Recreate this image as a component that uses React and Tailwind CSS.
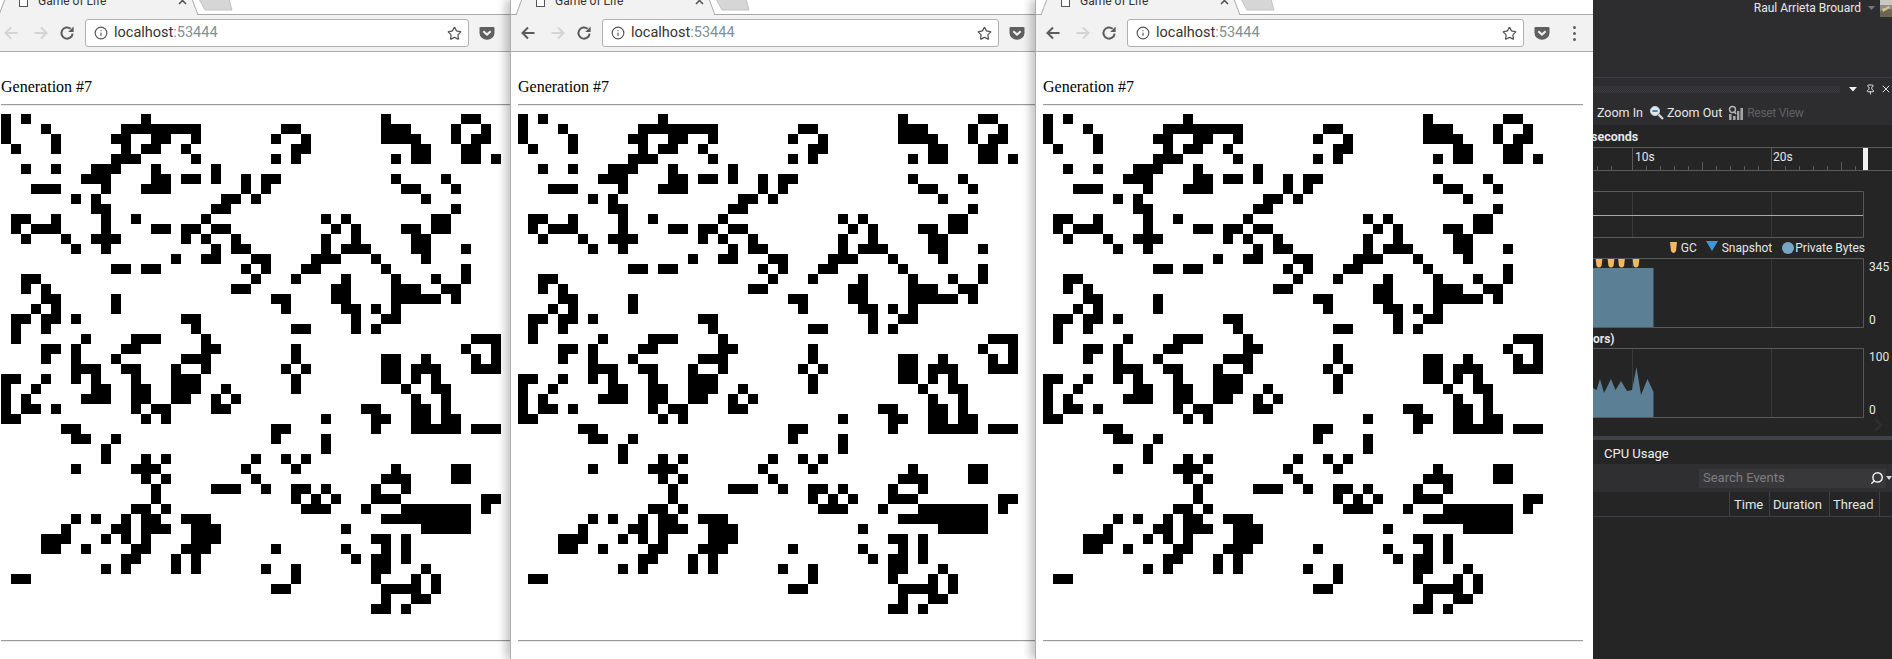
import React from "react";
import { Star, Info, X, Pin, Search } from "lucide-react";

const R = (a, b) => Array.from({ length: b - a + 1 }, (_, i) => a + i);
const ROWS = [
  [0, 2, 14, 38, 46, 47],
  [0, 4, ...R(12, 19), 28, 29, 38, 39, 40, 45, 48],
  [0, 5, 11, 12, 15, 16, 19, 27, 30, 38, 39, 40, 41, 45, 47, 48],
  [1, 5, 12, 14, 15, 18, 29, 30, 41, 42, 46, 47],
  [11, 12, 13, 19, 27, 29, 39, 41, 42, 46, 47, 49],
  [2, 5, 9, 10, 11, 15, 21],
  [8, 9, 10, 15, 16, 18, 19, 21, 24, 26, 27, 39, 44],
  [3, 4, 5, 10, 14, 15, 16, 24, 26, 40, 41, 45],
  [7, 9, 22, 23, 25, 42],
  [9, 10, 21, 22, 45],
  [1, 2, 5, 10, 13, 20, 32, 34, 43, 44],
  [1, 3, 4, 5, 10, 15, 16, 18, 19, 21, 22, 33, 35, 40, 41, 43, 44],
  [2, 6, 9, 10, 11, 18, 20, 23, 32, 35, 41, 42],
  [7, 10, 21, 23, 24, 32, 34, 35, 36, 41, 42, 46],
  [17, 20, 21, 25, 26, 31, 32, 33, 37, 42],
  [11, 12, 14, 15, 24, 26, 30, 31, 38, 46],
  [2, 3, 25, 29, 34, 39, 43, 46],
  [2, 4, 23, 24, 33, 34, 39, 40, 41, 44, 45],
  [4, 5, 11, 27, 28, 33, 34, 39, 40, 41, 42, 43, 45],
  [3, 5, 11, 28, 34, 35, 37, 39],
  [1, 2, 4, 5, 7, 18, 19, 35, 38, 39],
  [1, 4, 19, 29, 30, 35, 37],
  [1, 8, 13, 14, 15, 20, 47, 48, 49],
  [4, 5, 7, 12, 13, 20, 21, 29, 46, 49],
  [4, 7, 11, 18, 19, 20, 29, 38, 39, 42, 47, 49],
  [7, 8, 9, 12, 13, 17, 20, 28, 30, 38, 39, 41, 42, 43, 47, 48, 49],
  [0, 1, 4, 7, 9, 13, 17, 18, 19, 29, 38, 39, 41, 43],
  [0, 3, 9, 10, 13, 14, 17, 18, 19, 22, 29, 40, 43, 44],
  [0, 2, 8, 9, 10, 13, 14, 17, 18, 21, 23, 41, 44],
  [0, 2, 3, 5, 13, 15, 16, 21, 22, 36, 37, 41, 42, 44],
  [0, 1, 14, 16, 32, 37, 38, 41, 42, 44, 45],
  [6, 7, 27, 28, 37, 41, 42, 43, 44, 45, 47, 48, 49],
  [7, 8, 11, 27, 32],
  [10, 32],
  [10, 14, 16, 25, 28, 30],
  [7, 13, 14, 15, 24, 29, 39, 45, 46],
  [14, 16, 25, 38, 39, 40, 45, 46],
  [15, 21, 22, 23, 26, 29, 30, 32, 37, 40],
  [15, 29, 31, 33, 37, 38, 39, 48, 49],
  [13, 14, 16, 30, 31, 32, 36, ...R(40, 46), 48],
  [7, 9, 12, 14, 15, 18, 19, 20, ...R(38, 46)],
  [6, 11, 12, 14, 15, 16, 19, 20, 21, 34, ...R(42, 46)],
  [4, 5, 6, 10, 12, 14, 19, 20, 21, 37, 38, 40],
  [4, 5, 8, 13, 14, 18, 19, 20, 27, 34, 38, 40],
  [12, 13, 17, 19, 35, 37, 38, 40],
  [10, 12, 17, 19, 26, 29, 37, 38, 42],
  [1, 2, 29, 37, 41, 43],
  [27, 28, 38, 39, 40, 41, 43],
  [38, 41, 42],
  [37, 38, 40],
];

const CELLS = ROWS.flatMap((row, r) =>
  R(0, 49).map((c) => (
    <div key={r + "-" + c} className={row.includes(c) ? "h-[10px] bg-black" : "h-[10px]"} />
  ))
);

function Arrow({ dir, on }) {
  const d = dir === "back" ? "M14.5 8H2.5M8 2.5L2.5 8L8 13.5" : "M1.5 8H13.5M8 2.5L13.5 8L8 13.5";
  return (
    <svg width="16" height="16" viewBox="0 0 16 16" fill="none" className="shrink-0">
      <path d={d} stroke={on ? "#5c5c5c" : "#d4d4d4"} strokeWidth="2" />
    </svg>
  );
}

function Reload() {
  return (
    <svg width="16" height="16" viewBox="0 0 16 16" fill="none" className="shrink-0 ml-[10px]">
      <path d="M13.6 8.6A5.6 5.6 0 1 1 11.6 3.7" stroke="#5c5c5c" strokeWidth="2" />
      <polygon points="14.6,1.6 14.6,7 9.2,7" fill="#5c5c5c" />
    </svg>
  );
}

function Pocket() {
  return (
    <svg width="18" height="15" viewBox="0 0 18 15" fill="none" className="shrink-0 ml-[9px]">
      <path d="M2.5 1h13a1 1 0 0 1 1 1v5a7.5 6.8 0 0 1-15 0V2a1 1 0 0 1 1-1z" fill="#5f5f5f" />
      <path d="M5.3 5.3L9 8.6l3.7-3.3" stroke="#f2f2f2" strokeWidth="2" />
    </svg>
  );
}

function Window({ backOn, className }) {
  return (
    <div
      className={
        "relative shrink-0 h-[659px] bg-white border-l border-[#adadad] shadow-[-5px_0_8px_rgba(0,0,0,0.22)] overflow-hidden " +
        className
      }
    >
      <div className="relative h-[15px] overflow-hidden bg-white">
        <svg width="558" height="15" viewBox="0 0 558 15" className="absolute left-0 top-0">
          <polygon points="205,-1 235,-1 238,10 211,10" fill="#d6d6d6" stroke="#c4c4c4" />
          <line x1="0" y1="14.5" x2="558" y2="14.5" stroke="#a9a9a9" />
          <polygon points="5,16 11,-1 198,-1 204,16" fill="#f2f2f2" />
          <path d="M5 15L11 -1M198 -1L204 15" stroke="#a9a9a9" fill="none" />
        </svg>
        <div className="relative flex items-start h-[15px]">
          <div className="ml-[25px] -mt-[6px] w-[9px] h-[13px] shrink-0 border border-[#555] bg-white" />
          <div className="ml-[10px] -mt-[7px] text-[12px] leading-[16px] text-[#333] font-['Roboto',sans-serif] whitespace-nowrap">
            Game of Life
          </div>
          <svg width="9" height="9" viewBox="0 0 9 9" className="absolute left-[184px] -top-[4px]">
            <path d="M1 1L8 8M8 1L1 8" stroke="#555" strokeWidth="1.6" />
          </svg>
        </div>
      </div>
      <div className="flex items-center h-[37px] bg-[#f2f2f2] border-b border-[#ababab] pl-[9px]">
        <Arrow dir="back" on={backOn} />
        <div className="ml-[14px] shrink-0">
          <Arrow dir="fwd" on={false} />
        </div>
        <Reload />
        <div className="ml-[10px] flex-1 h-[28px] flex items-center bg-white border border-[#b0b0b0] rounded-[3px] pl-[8px] pr-[6px]">
          <Info size={14} strokeWidth={2} color="#555" />
          <div className="ml-[6px] flex-1 text-[14.5px] text-[#333] font-['Roboto',sans-serif]">
            localhost<span className="text-[#7f8f96]">:53444</span>
          </div>
          <Star size={15} strokeWidth={2} color="#555" />
        </div>
        <Pocket />
        <div className="ml-[22px] mr-[16px] w-[4px] flex flex-col gap-[3px]">
          <div className="w-[3px] h-[3px] rounded-full bg-[#5f5f5f]" />
          <div className="w-[3px] h-[3px] rounded-full bg-[#5f5f5f]" />
          <div className="w-[3px] h-[3px] rounded-full bg-[#5f5f5f]" />
        </div>
      </div>
      <div className="pl-[7px] pr-[10px] pt-[26px]">
        <div className="h-[18px] text-[16px] leading-[18px] text-black font-['Liberation_Serif',serif]">
          Generation #7
        </div>
        <div className="mt-[8px] h-[2px] border-t border-b border-t-[#9a9a9a] border-b-[#ececec]" />
        <div className="mt-[8px] grid grid-cols-[repeat(50,10px)]">{CELLS}</div>
        <div className="mt-[26px] h-[2px] border-t border-b border-t-[#9a9a9a] border-b-[#ececec]" />
      </div>
    </div>
  );
}

const WAVE =
  "M0 40 L3.5 42 L7 31 L11 45 L18 31 L22.5 42 L28 33 L34 43 L39 42 L43.5 19 L48 47 L54.5 31 L60.5 44 L60.5 69 L0 69 Z";

function Marker({ x }) {
  return <path d={`M${x - 3.5} 0h7l-1 8q-2.5 3 -5 0z`} fill="#f3b95f" />;
}

function Chart({ h, children, label1, label2 }) {
  return (
    <div className="flex">
      <svg width="271" height={h} viewBox={`0 0 271 ${h}`} className="shrink-0 block">
        <line x1="39.5" y1="0" x2="39.5" y2={h} stroke="#3a3a3c" />
        <line x1="178.5" y1="0" x2="178.5" y2={h} stroke="#3a3a3c" />
        {children}
        <path d={`M0 0.5H270.5V${h - 0.5}H0`} fill="none" stroke="#5a5a5c" />
      </svg>
      {label1 && (
        <div className="flex flex-col justify-between ml-[5px] text-[12px] leading-[16px] text-[#e6e6e6] pt-[1px]">
          <div>{label1}</div>
          <div>{label2}</div>
        </div>
      )}
    </div>
  );
}

function DevPanel() {
  return (
    <div className="relative shrink-0 w-[299px] h-[659px] bg-[#252526] overflow-hidden font-['Roboto',sans-serif] text-[12px] leading-[16px] text-[#e6e6e6]">
      <div className="h-[77px] bg-[#2d2d30] flex justify-end items-start">
        <div className="text-[12px] text-[#e8e8e8] whitespace-nowrap">Raul Arrieta Brouard</div>
        <svg width="8" height="5" viewBox="0 0 8 5" className="ml-[7px] mt-[6px]">
          <polygon points="0,0 7,0 3.5,4" fill="#77777a" />
        </svg>
        <svg width="12" height="17" viewBox="0 0 12 17" className="ml-[4px]">
          <rect width="12" height="17" fill="#8f8f88" />
          <rect y="0" width="12" height="5" fill="#c9c9c2" />
          <path d="M0 12L5 7L12 10V17H0Z" fill="#6e6454" />
          <path d="M2 9L9 6L10 8L3 12Z" fill="#d3c18e" />
        </svg>
      </div>
      <div className="h-[23px] bg-[#2d2d30] border-t border-[#3f3f46] flex items-center">
        <div className="w-[250px] h-[7px] bg-[repeating-conic-gradient(#3c3c40_0_25%,transparent_0_50%)] bg-[length:2px_2px]" />
        <svg width="9" height="5" viewBox="0 0 9 5" className="ml-[9px]">
          <polygon points="0,0 8,0 4,4.5" fill="#f0f0f0" />
        </svg>
        <Pin size={11} color="#f0f0f0" strokeWidth={2} className="ml-[7px]" />
        <X size={12} color="#e8e8e8" strokeWidth={2} className="ml-[4px]" />
      </div>
      <div className="h-[25px] bg-[#2d2d30] flex items-center pl-[4px] whitespace-nowrap text-[12.5px]">
        <span>Zoom In</span>
        <svg width="15" height="15" viewBox="0 0 15 15" className="ml-[6px]" fill="none">
          <circle cx="6" cy="6" r="4.6" fill="#dfe6ee" stroke="#c8c8c8" />
          <rect x="3.4" y="5" width="5.2" height="2" fill="#3f86c9" />
          <path d="M9.6 9.6L14 14" stroke="#d8d8d8" strokeWidth="2.2" />
        </svg>
        <span className="ml-[3px]">Zoom Out</span>
        <svg width="15" height="16" viewBox="0 0 15 16" className="ml-[6px]" fill="none">
          <circle cx="4.5" cy="4.5" r="3" stroke="#b5b5b5" strokeWidth="1.4" />
          <path d="M6.5 7L8 9" stroke="#b5b5b5" strokeWidth="1.5" />
          <path d="M1 15V9h2.6v6zM5 15v-4h2.6v4zM9 15V6h2.4v9zM12.4 15V3H15v12z" fill="#a5a5a5" />
        </svg>
        <span className="ml-[4px] text-[12px] tracking-[-0.3px] text-[#606064]">Reset View</span>
      </div>
      <div className="h-[22px] -ml-[2px] font-bold text-[12.5px] leading-[24px]">seconds</div>
      <div className="relative h-[24px] border-y border-[#5a5a5c]">
        <svg width="299" height="22" viewBox="0 0 299 22" className="absolute left-0 top-0">
          <path d="M4.5 22v-4M18.5 22v-4M39.5 22V0M53.5 22v-4M67.5 22v-4M81.5 22v-4M109.5 22v-8M95.5 22v-4M123.5 22v-4M137.5 22v-4M151.5 22v-4M165.5 22v-4M178.5 22V0M192.5 22v-4M206.5 22v-4M220.5 22v-4M234.5 22v-4M248.5 22v-8M262.5 22v-4" stroke="#5a5a5c" />
          <rect x="270" y="0" width="5" height="22" fill="#f0f0f0" />
        </svg>
        <span className="absolute left-[42px] top-[1px]">10s</span>
        <span className="absolute left-[180px] top-[1px]">20s</span>
      </div>
      <div className="h-[20px]" />
      <Chart h={47}>
        <line x1="0" y1="24.5" x2="270" y2="24.5" stroke="#a8a8a8" />
      </Chart>
      <div className="h-[20px] w-[272px] flex items-center justify-end whitespace-nowrap text-[12px]">
        <svg width="7" height="12" viewBox="0 0 7 12">
          <path d="M0 0h7l-1 9q-2.5 4 -5 0z" fill="#f3b95f" />
        </svg>
        <span className="ml-[4px]">GC</span>
        <svg width="12" height="10" viewBox="0 0 12 10" className="ml-[9px] -mt-[4px]">
          <polygon points="0,0 12,0 6,10" fill="#3f97d8" />
        </svg>
        <span className="ml-[4px]">Snapshot</span>
        <div className="ml-[10px] w-[12px] h-[12px] rounded-full bg-[#7aa6c6]" />
        <span className="ml-[1px]">Private Bytes</span>
      </div>
      <Chart h={70} label1="345" label2="0">
        <rect x="0" y="10" width="60.5" height="59" fill="#5b7f94" />
        <Marker x={6} />
        <Marker x={18} />
        <Marker x={28.5} />
        <Marker x={43} />
      </Chart>
      <div className="h-[20px] font-bold leading-[22px] whitespace-nowrap">ors)</div>
      <Chart h={70} label1="100" label2="0">
        <path d={WAVE} fill="#5b7f94" />
      </Chart>
      <div className="h-[18px] flex justify-end pr-[9px]">
        <svg width="9" height="14" viewBox="0 0 9 14" fill="none">
          <path d="M1 1L7 7L1 13" stroke="#2f2f31" strokeWidth="2.5" />
        </svg>
      </div>
      <div className="h-[4px] bg-[#3f3f46]" />
      <div className="h-[24px] pl-[11px] pt-[3px] flex items-center text-[13px] text-[#f0f0f0]">CPU Usage</div>
      <div className="h-[28px] bg-[#2f2f31] flex items-center justify-end">
        <div className="w-[187px] h-[19px] bg-[#38383b] flex items-center pl-[4px] pr-[2px] text-[13px] text-[#7e7e82]">
          <span className="flex-1">Search Events</span>
          <Search size={14} color="#f0f0f0" strokeWidth={2.5} className="-scale-x-100" />
        </div>
        <svg width="6" height="4" viewBox="0 0 6 4">
          <polygon points="0,0 6,0 3,4" fill="#d8d8d8" />
        </svg>
      </div>
      <div className="h-[25px] border-b border-[#3f3f46] flex items-stretch text-[13px] text-[#e6e6e6]">
        <div className="w-[136px]" />
        <div className="w-[40px] border-l border-[#3f3f46] pl-[4px] leading-[26px]">Time</div>
        <div className="w-[60px] border-l border-[#3f3f46] pl-[3px] leading-[26px]">Duration</div>
        <div className="w-[50px] border-l border-[#3f3f46] pl-[3px] leading-[26px]">Thread</div>
        <div className="flex-1 border-l border-[#3f3f46]" />
      </div>
    </div>
  );
}

export default function App() {
  return (
    <div className="flex w-[1892px] h-[659px] overflow-hidden bg-white">
      <Window backOn={false} className="w-[545px] -ml-[7px]" />
      <Window backOn className="w-[558px] -ml-[28px]" />
      <Window backOn className="w-[558px] -ml-[33px]" />
      <div className="relative">
        <DevPanel />
      </div>
    </div>
  );
}
